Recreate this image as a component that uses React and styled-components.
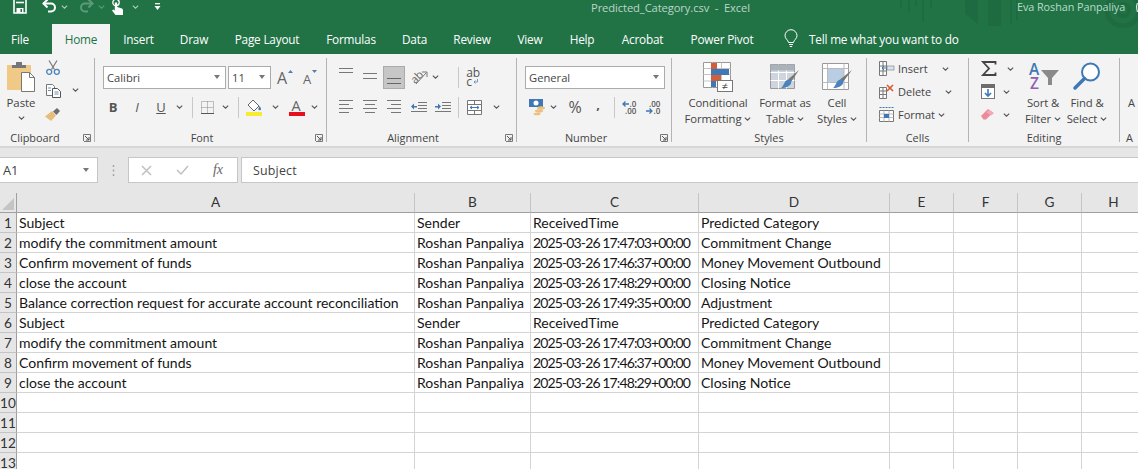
import React from "react";
import styled, { createGlobalStyle } from "styled-components";

const Global = createGlobalStyle`
  html, body { margin: 0; padding: 0; background: #fff; overflow: hidden; }
  * { box-sizing: border-box; }
  svg { display: block; overflow: visible; flex: none; }
`;

const UI = `"Open Sans", "Noto Sans", sans-serif`;

const Page = styled.div`
  width: 1138px; height: 469px; overflow: hidden; display: flex; flex-direction: column;
  font-family: ${UI}; color: #333; background: #fff;
`;

/* ---------- title bar ---------- */
const Header = styled.header`
  position: relative; height: 54px; background: #217346; flex: none; overflow: hidden;
`;
const TitleBar = styled.div`
  height: 24px; display: flex; align-items: flex-start; position: relative;
`;
const QuickAccess = styled.div`
  display: flex; align-items: center; height: 14px; width: 591px; padding-left: 13px;
`;
const QuickSlot = styled.span`
  display: flex; justify-content: center; align-items: center; flex: none;
  width: ${p => p.$w}px; margin-left: ${p => p.$ml || 0}px;
`;
const DocTitle = styled.div`
  width: 426px; font-size: 11.2px; line-height: 16px; color: #bcd6c7; white-space: pre; letter-spacing: -0.1px;
`;
const UserName = styled.div`
  font-size: 10.8px; line-height: 14px; color: #b9dcc8; white-space: nowrap; letter-spacing: -0.05px;
`;
const Watermark = styled.svg`
  position: absolute; left: 890px; top: 0; width: 248px; height: 26px; pointer-events: none;
`;
const TabBar = styled.nav`
  height: 30px; display: flex; align-items: stretch; font-size: 11.8px; color: #fff;
`;
const Tab = styled.div`
  display: flex; align-items: center; justify-content: center; flex: none; white-space: nowrap;
  width: ${p => p.$w}px; margin-right: ${p => p.$mr || 0}px; letter-spacing: -0.2px;
  background: ${p => (p.$active ? "#f3f3f3" : "transparent")};
  color: ${p => (p.$active ? "#217346" : "#fff")};
`;
const TellMe = styled.div`
  display: flex; align-items: center; gap: 11px; margin-left: 17px; white-space: nowrap; letter-spacing: -0.2px;
`;

/* ---------- ribbon ---------- */
const Ribbon = styled.section`
  height: 94px; flex: none; display: flex; background: #f3f3f3; border-bottom: 2px solid #d6d6d6; overflow: hidden;
`;
const Group = styled.div`
  position: relative; flex: none; width: ${p => p.$w}px; display: flex; flex-direction: column; height: 92px;
  &::after {
    content: ""; display: ${p => (p.$open ? "none" : "block")}; position: absolute; right: 0; top: 4px; bottom: 4px; width: 1px; background: #b4b4b4;
  }
`;
const GroupBody = styled.div`
  height: 76px; display: flex; flex-direction: ${p => (p.$row ? "row" : "column")}; padding-left: ${p => p.$pl || 0}px;
`;
const GroupLabel = styled.div`
  position: relative; height: 16px; font-size: 10.9px; line-height: 16px; color: #444; white-space: nowrap;
  width: ${p => p.$w}px; text-align: center;
`;
const Launcher = styled.svg`
  position: absolute; right: ${p => p.$r}px; top: 80px; width: 8px; height: 8px;
`;
const ToolRow = styled.div`
  display: flex; align-items: center; height: ${p => p.$h}px; padding-left: ${p => p.$pl || 0}px; padding-top: ${p => p.$pt || 0}px;
`;
const Tool = styled.span`
  display: flex; align-items: center; justify-content: center; flex: none; height: 100%;
  width: ${p => p.$w}px; margin-left: ${p => p.$ml || 0}px;
`;
const Sep = styled.span`
  flex: none; width: 1px; height: 21px; background: #c8c8c8; margin-left: ${p => p.$ml}px;
`;
const Combo = styled.div`
  display: flex; align-items: center; flex: none; height: 23px; width: ${p => p.$w}px; margin-left: ${p => p.$ml || 0}px;
  background: #fff; border: 1px solid #ababab; padding: 0 5px 0 3px; font-size: 11.2px; color: #444;
  justify-content: space-between;
`;
const ComboCaret = styled.i`
  width: 0; height: 0; border-left: 3.5px solid transparent; border-right: 3.5px solid transparent; border-top: 4px solid #777;
`;
const SelectedTool = styled.span`
  display: flex; align-items: center; justify-content: center; flex: none; height: 23px; width: 22px; margin-left: ${p => p.$ml}px;
  background: #c6c6c6; border: 1px solid #ababab;
`;
const TextTool = styled.span`
  font-family: ${UI}; font-size: 13px; line-height: 1; color: #555;
  font-style: ${p => (p.$italic ? "italic" : "normal")};
  font-weight: ${p => (p.$bold ? 700 : 400)};
  text-decoration: ${p => (p.$under ? "underline" : "none")};
  transform: translateY(${p => p.$lift || 0}px);
`;
const Percent = styled.span`
  font-size: 16px; color: #555; line-height: 1; font-family: ${UI};
`;
const WrapGlyph = styled.span`
  display: flex; flex-direction: column; font-size: 12px; line-height: 9px; color: #555; letter-spacing: -0.3px;
`;
const WrapLine = styled.span`
  display: flex; align-items: center; gap: 1px;
`;
const Decimal = styled.span`
  display: flex; flex-direction: column; align-items: flex-end; font-size: 8px; line-height: 7px; color: #555; font-weight: 600;
`;
const DecimalLine = styled.span`
  display: flex; align-items: center; gap: 1px;
`;
const PasteColumn = styled.div`
  width: 30px; flex: none; display: flex; flex-direction: column; align-items: center; padding-top: 7px; font-size: 11.4px; color: #444;
`;
const PasteCaption = styled.span`
  margin-top: 3px; line-height: 16px;
`;
const PasteCaret = styled.span`
  margin-top: 5px;
`;
const ClipTools = styled.div`
  margin-left: 9px; width: 16px; flex: none; display: flex; flex-direction: column; align-items: center; padding-top: 6px; gap: 9px;
`;
const ClipChevron = styled.div`
  margin-left: 11px; padding-top: 34px;
`;
const LargeTool = styled.div`
  flex: none; display: flex; flex-direction: column; align-items: center; width: ${p => p.$w}px; margin-left: ${p => p.$ml || 0}px;
  padding-top: 8px; font-size: 11.3px; color: #444; white-space: nowrap; letter-spacing: -0.1px;
`;
const LargeIcon = styled.div`
  height: 33px; display: flex; align-items: flex-start; justify-content: center;
`;
const LargeLine = styled.div`
  display: flex; align-items: center; gap: 3px; line-height: 16px; height: 16px;
`;
const CellAction = styled.div`
  display: flex; align-items: center; height: 23px; font-size: 11px; color: #444;
`;
const CellIcon = styled.span`
  width: 15px; margin-right: 4px; flex: none; display: flex; justify-content: center;
`;
const CellCaret = styled.span`
  margin-left: ${p => p.$ml}px;
`;
const CellsColumn = styled.div`
  padding: 3px 0 0 12px; display: flex; flex-direction: column;
`;
const EditColumn = styled.div`
  width: 52px; flex: none; padding: 3px 0 0 0; display: flex; flex-direction: column;
`;
const EditRow = styled.div`
  display: flex; align-items: center; height: 23px; padding-left: 12px;
`;
const EditCaret = styled.span`
  margin-left: ${p => p.$ml}px;
`;
const ClippedLetter = styled.div`
  font-size: 11px; color: #444; padding: 41px 0 0 8px; line-height: 16px;
`;

/* ---------- formula bar ---------- */
const FormulaBand = styled.div`
  height: 45px; flex: none; background: #e6e6e6; display: flex; align-items: flex-start; padding-top: 9px;
`;
const NameBox = styled.div`
  width: 98px; height: 26px; background: #fff; border: 1px solid #c6c6c6; border-left: none;
  display: flex; align-items: center; justify-content: space-between; padding: 0 8px 0 3px; font-size: 12.8px; color: #444;
`;
const Grip = styled.div`
  width: 30px; height: 26px; display: flex; align-items: center; justify-content: center; flex: none;
`;
const FxBox = styled.div`
  width: 110px; height: 26px; background: #fff; border: 1px solid #c6c6c6; display: flex; align-items: center; flex: none;
`;
const FxSlot = styled.span`
  width: ${p => p.$w}px; margin-left: ${p => p.$ml || 0}px; flex: none; display: flex; justify-content: center;
  font: italic 14px "Liberation Serif", serif; color: #666;
`;
const FormulaInput = styled.div`
  flex: 1; height: 26px; margin-left: 3px; background: #fff; border: 1px solid #c6c6c6; border-right: none;
  display: flex; align-items: center; padding-left: 11px; font-size: 12.4px; color: #444; letter-spacing: 0.2px;
`;

/* ---------- sheet ---------- */
const Sheet = styled.div`
  flex: 1; display: grid; grid-template-columns: 17px 398px 116px 168px 191px 64px 64px 64px 64px;
  grid-auto-rows: 20px; align-content: start; background: #fff; overflow: hidden;
`;
const Corner = styled.div`
  background: #e6e6e6; border-right: 1px solid #9f9f9f; border-bottom: 1px solid #9f9f9f; position: relative; overflow: hidden;
  &::after {
    content: ""; position: absolute; right: 2px; bottom: 2px; width: 0; height: 0;
    border-left: 12px solid transparent; border-bottom: 12px solid #c4c4c4;
  }
`;
const ColHead = styled.div`
  background: #e6e6e6; border-right: 1px solid #c4c4c4; border-bottom: 1px solid #9f9f9f;
  display: flex; align-items: center; justify-content: center; padding-bottom: 2px;
  font-family: Lato, sans-serif; font-size: 13.6px; color: #333;
`;
const RowHead = styled.div`
  background: #e6e6e6; border-right: 1px solid #9f9f9f; border-bottom: 1px solid #c4c4c4;
  display: flex; align-items: center; justify-content: center; overflow: hidden;
  font-family: Lato, sans-serif; font-size: 13.6px; color: #333;
`;
const Cell = styled.div`
  border-right: 1px solid #d4d4d4; border-bottom: 1px solid #d4d4d4; padding: 0 2px;
  font-family: Lato, sans-serif; font-size: 14.03px; line-height: 20px; color: #161616; white-space: nowrap; overflow: hidden;
  letter-spacing: ${p => (p.$date ? "-0.88px" : "0")};
`;

/* ---------- icons ---------- */
const Chev = ({ c = "#555", s = 7 }) => (
  <svg width={s} height={4} viewBox="0 0 7 4"><path d="M.8.6 3.5 3.2 6.2.6" fill="none" stroke={c} strokeWidth="1.1" /></svg>
);
const Launch = ({ r }) => (
  <Launcher $r={r} viewBox="0 0 8 8"><path d="M.5 7V.5H7.5V7.5H1" fill="none" stroke="#777" /><path d="M2 2l4 4M6 3v3H3" fill="none" stroke="#555" /></Launcher>
);
const SaveIcon = () => (
  <svg width="14" height="14" viewBox="0 0 14 14"><path d="M1-3h12v16H1z" fill="none" stroke="#fff" strokeWidth="1.6" /><path d="M3.5 13V8h7v5" fill="#fff" /><path d="M7.5 9h1.500v3H7.500z" fill="#217346" /><path d="M3 2.500h8" stroke="#fff" strokeWidth="1.6" /></svg>
);
const UndoIcon = ({ c = "#fff" }) => (
  <svg width="15" height="14" viewBox="0 0 15 14"><path d="M1.500 3.500h7.500a4 4 0 0 1 0 8H6" fill="none" stroke={c} strokeWidth="2" /><path d="M5.500-.5 1.500 3.500l4 4" fill="none" stroke={c} strokeWidth="2" /></svg>
);
const RedoIcon = () => (
  <svg width="15" height="14" viewBox="0 0 15 14"><path d="M13.500 3.500H6a4 4 0 0 0 0 8h3" fill="none" stroke="#5d9a78" strokeWidth="2" /><path d="M9.500-.5l4 4-4 4" fill="none" stroke="#5d9a78" strokeWidth="2" /></svg>
);
const TouchIcon = () => (
  <svg width="13" height="15" viewBox="0 0 13 15"><circle cx="5" cy="2.500" r="3.200" fill="none" stroke="#fff" strokeWidth="1.300" /><path d="M3.800 2.500h2.400v4.500l4 1.300c1.200.4 1.800 1 1.800 2.200V15H4.500L1 10.500l1.200-1 1.600 1z" fill="#fff" /></svg>
);
const CustomizeIcon = () => (
  <svg width="7" height="8" viewBox="0 0 7 8"><path d="M1 .7h5" stroke="#fff" strokeWidth="1.200" /><path d="M.5 3h6L3.500 7z" fill="#fff" /></svg>
);
const BulbIcon = () => (
  <svg width="14" height="18" viewBox="0 0 14 18"><path d="M4.500 12.500C4.200 10 1 8.800 1 5.700a6 6 0 0 1 12 0c0 3.100-3.200 4.300-3.500 6.800z" fill="none" stroke="#fff" /><path d="M5 14.500h4M5.800 16.500h2.400" stroke="#fff" /></svg>
);
const PasteIcon = () => (
  <svg width="28" height="31" viewBox="0 0 28 31"><rect x="0" y="4" width="24" height="25" fill="#f0c987" /><path d="M5 7V4h4V1h6v3h4v3z" fill="#767676" /><path d="M14.500 11.500h8l5 5v14h-13z" fill="#fff" stroke="#777" /><path d="M22.500 11.500v5h5" fill="none" stroke="#777" /></svg>
);
const CutIcon = () => (
  <svg width="14" height="15" viewBox="0 0 14 15"><path d="M3 .5l5.500 9M11 .5 5.500 9.500" stroke="#777" strokeWidth="1.200" fill="none" /><circle cx="3.200" cy="11.800" r="2.500" fill="none" stroke="#4f82b8" strokeWidth="1.300" /><circle cx="10.800" cy="11.800" r="2.500" fill="none" stroke="#4f82b8" strokeWidth="1.300" /></svg>
);
const CopyIcon = () => (
  <svg width="15" height="14" viewBox="0 0 15 14"><path d="M.5.500h6l2 2v9h-8z" fill="#fff" stroke="#777" /><path d="M6.500 4.500h5l3 3v6h-8z" fill="#fff" stroke="#555" /><path d="M2 4h3M2 6.500h3M8.500 8h4M8.500 10h4" stroke="#6d8fb2" /></svg>
);
const BrushIcon = () => (
  <svg width="16" height="14" viewBox="0 0 16 14"><path d="M0 9.500 7 4l4 4.500L6 14z" fill="#e7bd7a" /><path d="M8 4.500 12 1l3 3-3.500 4z" fill="#6d6d6d" /></svg>
);
const GrowIcon = ({ s = 14, up }) => (
  <svg width="18" height="16" viewBox="0 0 18 16">
    <text x={up ? 1 : 3} y="15" fontFamily="Open Sans" fontSize={s} fill="#666">A</text>
    <path d={up ? "M12 4l2.500-3L17 4z" : "M12 1h5l-2.500 3z"} fill="#4f7fae" />
  </svg>
);
const BordersIcon = () => (
  <svg width="13" height="13" viewBox="0 0 13 13"><path d="M.5.500h12v12H.5zM6.500.500v12M.5 6.500h12" fill="none" stroke="#888" strokeDasharray="1 1" /><path d="M0 12.500h13" stroke="#555" /></svg>
);
const FillIcon = () => (
  <svg width="16" height="17" viewBox="0 0 16 17"><path d="M7 1l6 6-5 5-6-6z" fill="#fff" stroke="#666" /><path d="M13.500 7c1 1.400 1.500 2.300 1.500 3a1.300 1.300 0 0 1-2.600 0c0-.6.400-1.500 1.100-3z" fill="#3f77b4" /><rect y="13" width="16" height="4" fill="#f7ec31" /></svg>
);
const FontColorIcon = () => (
  <svg width="16" height="17" viewBox="0 0 16 17"><text x="2.500" y="12" fontFamily="Open Sans" fontSize="14.500" fill="#666">A</text><rect y="13" width="16" height="4" fill="#e60f1c" /></svg>
);
const Lines = ({ rows, w = 14, c = "#777" }) => (
  <svg width={w} height="14" viewBox={`0 0 ${w} 14`}>
    {rows.map(([x1, x2, y], i) => <path key={i} d={`M${x1} ${y + 0.5}H${x2}`} stroke={c} />)}
  </svg>
);
const OrientIcon = () => (
  <svg width="18" height="16" viewBox="0 0 18 16"><text x="0" y="12" transform="rotate(-45 6 9)" fontFamily="Open Sans" fontSize="11" fill="#666">ab</text><path d="M5 15 15 4M11 3h5v5" fill="none" stroke="#777" /></svg>
);
const IndentIcon = ({ inc }) => (
  <svg width="16" height="12" viewBox="0 0 16 12">
    <path d="M7 1.500h9M7 4.500h9M7 7.500h9M0 10.500h16" stroke="#777" fill="none" />
    <path d={inc ? "M0 5h3V2.500L6 5.500 3 8.500V6.500H0z" : "M6 5H3V2.500L0 5.500l3 3V6.500h3z"} fill="#3f78b5" />
  </svg>
);
const MergeIcon = () => (
  <svg width="15" height="15" viewBox="0 0 15 15"><path d="M.5.500h14v14H.5zM.5 4.500h14M.5 10.500h14M7.500.500v4M7.500 10.500v4" fill="#fff" stroke="#777" /><path d="M3 7.500h9M3 7.500l2-1.500M3 7.500l2 1.500M12 7.500l-2-1.500M12 7.500l-2 1.500" stroke="#3f78b5" fill="none" /></svg>
);
const CurrencyIcon = () => (
  <svg width="17" height="16" viewBox="0 0 17 16"><rect x="0" y="0" width="14" height="8" fill="#3f78b5" /><ellipse cx="7" cy="4" rx="2.500" ry="2.500" fill="#fff" /><ellipse cx="12" cy="9" rx="4" ry="1.700" fill="#ecc17c" /><ellipse cx="10" cy="12" rx="4" ry="1.700" fill="#ecc17c" /><ellipse cx="8" cy="15" rx="3.500" ry="1.300" fill="#ecc17c" /></svg>
);
const ArrowLeft = () => <svg width="7" height="6" viewBox="0 0 7 6"><path d="M7 3H1.500M3.500.5 1 3l2.500 2.500" fill="none" stroke="#3f78b5" strokeWidth="1.300" /></svg>;
const ArrowRight = () => <svg width="7" height="6" viewBox="0 0 7 6"><path d="M0 3h5.500M3.500.5 6 3 3.500 5.500" fill="none" stroke="#3f78b5" strokeWidth="1.300" /></svg>;
const ReturnArrow = () => <svg width="5" height="5" viewBox="0 0 5 5"><path d="M4.500 0v3H1M2.500 1.500 1 3l1.500 1.500" fill="none" stroke="#5a86b4" strokeWidth=".8" /></svg>;
const CondIcon = () => (
  <svg width="30" height="30" viewBox="0 0 30 30">
    <path d="M.5.500h27v25H.5z" fill="#fff" stroke="#999" /><path d="M9.500.500v25M18.500.500v25M.5 6.500h27M.5 12.500h27M.5 19h27" stroke="#c4c4c4" fill="none" />
    <rect x="8" y="1" width="6" height="6" fill="#d0603a" /><rect x="8" y="7" width="18" height="6" fill="#3f78b5" /><rect x="8" y="13" width="10" height="6" fill="#d0603a" /><rect x="8" y="19" width="5" height="6" fill="#3f78b5" />
    <rect x="14.500" y="18.500" width="15" height="11" fill="#fff" stroke="#777" /><text x="18.500" y="28" fontFamily="Open Sans" fontSize="11" fill="#444">≠</text>
  </svg>
);
const TableBrushIcon = () => (
  <svg width="30" height="30" viewBox="0 0 30 30">
    <path d="M.5 2.500h24v24H.5z" fill="#cfd5dc" stroke="#999" /><path d="M8.500 2.500v24M16.500 2.500v24M.5 10.500h24M.5 18.500h24" stroke="#fff" fill="none" /><path d="M.5 2.500h24v6H.5z" fill="#aab2ba" />
    <path d="M29 8 21 20l-3-2.500z" fill="#777" /><path d="M17 18c3-1 5 1 4 3.500-1 2.500-5 4.500-10 4.500 3-2 3-6.500 6-8z" fill="#4a83bd" />
  </svg>
);
const CellStyleIcon = () => (
  <svg width="30" height="30" viewBox="0 0 30 30">
    <path d="M.5 1.500h26v26H.5z" fill="#fff" stroke="#999" /><rect x="5" y="6" width="17" height="14" fill="#b9cde3" /><path d="M.5 6.500h26M5.500 1.500v26M22 1.500v26M.5 20.500h26" stroke="#bbb" fill="none" />
    <path d="M30 8 21 20l-3-2.500z" fill="#777" /><path d="M17 18c3-1 5 1 4 3.500-1 2.500-5 4.500-10 4.500 3-2 3-6.500 6-8z" fill="#4a83bd" />
  </svg>
);
const InsertIcon = () => (
  <svg width="15" height="15" viewBox="0 0 15 15"><path d="M.5.500h7v14h-7zM.5 5h7M.5 10h7M4 .5v14" fill="#fff" stroke="#777" /><rect x="8" y="5" width="7" height="4" fill="#d8e4f0" stroke="#777" strokeWidth=".6" /><path d="M8 7H3M5 5 3 7l2 2" stroke="#3f78b5" fill="none" /></svg>
);
const DeleteIcon = () => (
  <svg width="15" height="15" viewBox="0 0 15 15"><path d="M.5 3.500h7v11h-7zM.5 7h7M.5 10.500h7M4 3.500v11" fill="#fff" stroke="#777" /><path d="M8 1l6 6M14 1 8 7" stroke="#d9582c" strokeWidth="1.600" /></svg>
);
const FormatIcon = () => (
  <svg width="15" height="15" viewBox="0 0 15 15"><path d="M.5 3.500h14v11H.5z" fill="#fff" stroke="#777" /><path d="M.5 7h14M.5 10.500h14M5 3.500v11M10 3.500v11" stroke="#bbb" /><rect x="5" y="7" width="5" height="4" fill="#3f78b5" /><path d="M.5.500h14" stroke="#3f78b5" strokeDasharray="2 1" /></svg>
);
const SumIcon = () => (
  <svg width="16" height="15" viewBox="0 0 16 15"><path d="M14.500 3.500V1H2l6 6.500L2 14h12.500v-2.500" fill="none" stroke="#444" strokeWidth="1.800" /></svg>
);
const FillDownIcon = () => (
  <svg width="14" height="15" viewBox="0 0 14 15"><rect x=".5" y=".5" width="13" height="14" fill="#fff" stroke="#777" /><rect x="0" y="0" width="14" height="4" fill="#6d6d6d" /><path d="M7 5v7M4 9l3 3 3-3" stroke="#3f78b5" strokeWidth="1.600" fill="none" /></svg>
);
const EraserIcon = () => (
  <svg width="14" height="11" viewBox="0 0 14 11"><path d="M0 7l7-7 5 3.500-7 7H2.500z" fill="#ec8a9b" /><path d="M8 1l5 3-2.500 2.500-5-3z" fill="#f3a9b6" /></svg>
);
const SortIcon = () => (
  <svg width="31" height="29" viewBox="0 0 31 29">
    <text x="1" y="13" fontFamily="Open Sans" fontWeight="600" fontSize="15.500" fill="#3f78b5">A</text>
    <text x="2" y="27" fontFamily="Open Sans" fontWeight="600" fontSize="15.500" fill="#8f5fb0">Z</text>
    <path d="M13 8h18l-7 8v7h-4v-7z" fill="#8a8a8a" />
  </svg>
);
const FindIcon = () => (
  <svg width="28" height="28" viewBox="0 0 28 28"><circle cx="17.500" cy="10" r="8.500" fill="#fff" stroke="#3f78b5" strokeWidth="2" /><path d="M11.500 16.500 2 26" stroke="#3f78b5" strokeWidth="3.500" strokeLinecap="round" /></svg>
);
const XIcon = () => <svg width="11" height="11" viewBox="0 0 11 11"><path d="M1 1l9 9M10 1l-9 9" stroke="#c0c0c0" strokeWidth="1.500" /></svg>;
const CheckIcon = () => <svg width="13" height="10" viewBox="0 0 13 10"><path d="M1 5l4 4 7-8" fill="none" stroke="#c0c0c0" strokeWidth="1.500" /></svg>;
const GripIcon = () => <svg width="3" height="11" viewBox="0 0 3 11"><path d="M1.500 0v2M1.500 4.500v2M1.500 9v2" stroke="#a5a5a5" strokeWidth="1.500" /></svg>;

const rows = [
  ["Subject", "Sender", "ReceivedTime", "Predicted Category"],
  ["modify the commitment amount", "Roshan Panpaliya", "2025-03-26 17:47:03+00:00", "Commitment Change"],
  ["Confirm movement of funds", "Roshan Panpaliya", "2025-03-26 17:46:37+00:00", "Money Movement Outbound"],
  ["close the account", "Roshan Panpaliya", "2025-03-26 17:48:29+00:00", "Closing Notice"],
  ["Balance correction request for accurate account reconciliation", "Roshan Panpaliya", "2025-03-26 17:49:35+00:00", "Adjustment"],
  ["Subject", "Sender", "ReceivedTime", "Predicted Category"],
  ["modify the commitment amount", "Roshan Panpaliya", "2025-03-26 17:47:03+00:00", "Commitment Change"],
  ["Confirm movement of funds", "Roshan Panpaliya", "2025-03-26 17:46:37+00:00", "Money Movement Outbound"],
  ["close the account", "Roshan Panpaliya", "2025-03-26 17:48:29+00:00", "Closing Notice"],
  [], [], [], [],
];
const cols = ["A", "B", "C", "D", "E", "F", "G", "H"];
const tabs = [
  ["File", 40, false, 12], ["Home", 58, true], ["Insert", 57], ["Draw", 54], ["Page Layout", 92], ["Formulas", 76], ["Data", 51], ["Review", 64], ["View", 52], ["Help", 52], ["Acrobat", 69], ["Power Pivot", 90],
];
const isDate = (s) => /^\d{4}-/.test(s || "");

export default function App() {
  return (
    <Page>
      <Global />
      <Header>
        <Watermark viewBox="0 0 248 26">
          <g fill="#1f6b41">
            <rect x="10" y="-2" width="2" height="10" /><rect x="18" y="-2" width="2" height="14" /><rect x="25" y="-2" width="2" height="8" /><rect x="32" y="-2" width="2" height="24" /><rect x="40" y="-2" width="2" height="10" />
            <path d="M75-2h13v26L75 14z" /><rect x="98" y="-2" width="13" height="28" /><rect x="120" y="-2" width="2" height="26" /><rect x="126" y="-2" width="2" height="22" />
          </g>
          <circle cx="233" cy="10" r="16" fill="none" stroke="#1f6b41" strokeWidth="5" />
          <circle cx="233" cy="10" r="6" fill="none" stroke="#1f6b41" strokeWidth="4" />
          <path d="M247.500 3c-1 2-1 6 0 9" fill="none" stroke="#dce9e1" strokeWidth="1.200" />
        </Watermark>
        <TitleBar>
          <QuickAccess>
            <QuickSlot $w={14}><SaveIcon /></QuickSlot>
            <QuickSlot $w={15} $ml={15}><UndoIcon /></QuickSlot>
            <QuickSlot $w={7} $ml={4}><Chev c="#a9cdb9" /></QuickSlot>
            <QuickSlot $w={15} $ml={11}><RedoIcon /></QuickSlot>
            <QuickSlot $w={7} $ml={4}><Chev c="#5d9a78" /></QuickSlot>
            <QuickSlot $w={13} $ml={6}><TouchIcon /></QuickSlot>
            <QuickSlot $w={7} $ml={8}><Chev c="#a9cdb9" /></QuickSlot>
            <QuickSlot $w={7} $ml={15}><CustomizeIcon /></QuickSlot>
          </QuickAccess>
          <DocTitle>Predicted_Category.csv  -  Excel</DocTitle>
          <UserName>Eva Roshan Panpaliya</UserName>
        </TitleBar>
        <TabBar>
          {tabs.map(([t, w, a, mr]) => <Tab key={t} $w={w} $active={a} $mr={mr}>{t}</Tab>)}
          <TellMe><BulbIcon />Tell me what you want to do</TellMe>
        </TabBar>
      </Header>

      <Ribbon>
        <Group $w={95}>
          <GroupBody $row $pl={6}>
            <PasteColumn>
              <PasteIcon />
              <PasteCaption>Paste</PasteCaption>
              <PasteCaret><Chev /></PasteCaret>
            </PasteColumn>
            <ClipTools><CutIcon /><CopyIcon /><BrushIcon /></ClipTools>
            <ClipChevron><Chev /></ClipChevron>
          </GroupBody>
          <GroupLabel $w={70}>Clipboard</GroupLabel>
          <Launch r={4} />
        </Group>

        <Group $w={232}>
          <GroupBody>
            <ToolRow $h={42} $pl={8} $pt={4}>
              <Combo $w={123}>Calibri<ComboCaret /></Combo>
              <Combo $w={43} $ml={2}>11<ComboCaret /></Combo>
              <Tool $w={18} $ml={5}><GrowIcon s={16} up /></Tool>
              <Tool $w={18} $ml={6}><GrowIcon s={13} /></Tool>
            </ToolRow>
            <ToolRow $h={22} $pl={6}>
              <Tool $w={24}><TextTool $bold>B</TextTool></Tool>
              <Tool $w={24}><TextTool $italic>I</TextTool></Tool>
              <Tool $w={24}><TextTool $under>U</TextTool></Tool>
              <Tool $w={12}><Chev /></Tool>
              <Sep $ml={7} />
              <Tool $w={16} $ml={6}><BordersIcon /></Tool>
              <Tool $w={20}><Chev /></Tool>
              <Sep $ml={3} />
              <Tool $w={16} $ml={7}><FillIcon /></Tool>
              <Tool $w={9} $ml={9}><Chev /></Tool>
              <Tool $w={16} $ml={9}><FontColorIcon /></Tool>
              <Tool $w={10} $ml={4}><Chev /></Tool>
            </ToolRow>
          </GroupBody>
          <GroupLabel $w={214}>Font</GroupLabel>
          <Launch r={4} />
        </Group>

        <Group $w={190}>
          <GroupBody>
            <ToolRow $h={42} $pl={9} $pt={4}>
              <Tool $w={16} $ml={2}><Lines rows={[[0, 14, -2], [0, 14, 2]]} /></Tool>
              <Tool $w={16} $ml={8}><Lines rows={[[0, 14, 3], [0, 14, 8]]} /></Tool>
              <SelectedTool $ml={5}><Lines rows={[[0, 14, 8], [0, 14, 13]]} c="#666" /></SelectedTool>
              <Tool $w={18} $ml={6}><OrientIcon /></Tool>
              <Tool $w={8} $ml={2}><Chev /></Tool>
              <Sep $ml={19} />
              <Tool $w={16} $ml={6}>
                <WrapGlyph>
                  <span>ab</span>
                  <WrapLine>c<ReturnArrow /></WrapLine>
                </WrapGlyph>
              </Tool>
            </ToolRow>
            <ToolRow $h={22} $pl={11}>
              <Tool $w={16}><Lines rows={[[0, 14, 0], [0, 10, 4], [0, 14, 8], [0, 10, 12]]} /></Tool>
              <Tool $w={16} $ml={8}><Lines rows={[[0, 14, 0], [2, 12, 4], [0, 14, 8], [2, 12, 12]]} /></Tool>
              <Tool $w={16} $ml={8}><Lines rows={[[0, 14, 0], [4, 14, 4], [0, 14, 8], [4, 14, 12]]} /></Tool>
              <Tool $w={16} $ml={9}><IndentIcon /></Tool>
              <Tool $w={16} $ml={8}><IndentIcon inc /></Tool>
              <Sep $ml={7} />
              <Tool $w={16} $ml={7}><MergeIcon /></Tool>
              <Tool $w={8} $ml={10}><Chev /></Tool>
            </ToolRow>
          </GroupBody>
          <GroupLabel $w={172}>Alignment</GroupLabel>
          <Launch r={4} />
        </Group>

        <Group $w={155}>
          <GroupBody>
            <ToolRow $h={42} $pl={8} $pt={4}>
              <Combo $w={140}>General<ComboCaret /></Combo>
            </ToolRow>
            <ToolRow $h={22} $pl={11}>
              <Tool $w={18}><CurrencyIcon /></Tool>
              <Tool $w={8} $ml={3}><Chev /></Tool>
              <Tool $w={18} $ml={9}><Percent>%</Percent></Tool>
              <Tool $w={8} $ml={10}><TextTool $bold $lift={-3}>,</TextTool></Tool>
              <Sep $ml={12} />
              <Tool $w={16} $ml={6}>
                <Decimal>
                  <DecimalLine><ArrowLeft />.0</DecimalLine>
                  <span>.00</span>
                </Decimal>
              </Tool>
              <Tool $w={16} $ml={8}>
                <Decimal>
                  <span>.00</span>
                  <DecimalLine><ArrowRight />.0</DecimalLine>
                </Decimal>
              </Tool>
            </ToolRow>
          </GroupBody>
          <GroupLabel $w={138}>Number</GroupLabel>
          <Launch r={4} />
        </Group>

        <Group $w={195}>
          <GroupBody $row>
            <LargeTool $w={72} $ml={10}>
              <LargeIcon><CondIcon /></LargeIcon>
              <LargeLine>Conditional</LargeLine>
              <LargeLine>Formatting <Chev /></LargeLine>
            </LargeTool>
            <LargeTool $w={62}>
              <LargeIcon><TableBrushIcon /></LargeIcon>
              <LargeLine>Format as</LargeLine>
              <LargeLine>Table <Chev /></LargeLine>
            </LargeTool>
            <LargeTool $w={42}>
              <LargeIcon><CellStyleIcon /></LargeIcon>
              <LargeLine>Cell</LargeLine>
              <LargeLine>Styles <Chev /></LargeLine>
            </LargeTool>
          </GroupBody>
          <GroupLabel $w={194}>Styles</GroupLabel>
        </Group>

        <Group $w={102}>
          <GroupBody>
            <CellsColumn>
              <CellAction><CellIcon><InsertIcon /></CellIcon>Insert<CellCaret $ml={14}><Chev /></CellCaret></CellAction>
              <CellAction><CellIcon><DeleteIcon /></CellIcon>Delete<CellCaret $ml={14}><Chev /></CellCaret></CellAction>
              <CellAction><CellIcon><FormatIcon /></CellIcon>Format<CellCaret $ml={3}><Chev /></CellCaret></CellAction>
            </CellsColumn>
          </GroupBody>
          <GroupLabel $w={101}>Cells</GroupLabel>
        </Group>

        <Group $w={151}>
          <GroupBody $row>
            <EditColumn>
              <EditRow><SumIcon /><EditCaret $ml={10}><Chev /></EditCaret></EditRow>
              <EditRow><FillDownIcon /><EditCaret $ml={8}><Chev /></EditCaret></EditRow>
              <EditRow><EraserIcon /><EditCaret $ml={8}><Chev /></EditCaret></EditRow>
            </EditColumn>
            <LargeTool $w={44}>
              <LargeIcon><SortIcon /></LargeIcon>
              <LargeLine>Sort &amp;</LargeLine>
              <LargeLine>Filter <Chev /></LargeLine>
            </LargeTool>
            <LargeTool $w={44}>
              <LargeIcon><FindIcon /></LargeIcon>
              <LargeLine>Find &amp;</LargeLine>
              <LargeLine>Select <Chev /></LargeLine>
            </LargeTool>
          </GroupBody>
          <GroupLabel $w={150}>Editing</GroupLabel>
        </Group>

        <Group $w={19} $open>
          <GroupBody><ClippedLetter>A</ClippedLetter></GroupBody>
          <GroupLabel $w={19}>A</GroupLabel>
        </Group>
      </Ribbon>

      <FormulaBand>
        <NameBox>A1<ComboCaret /></NameBox>
        <Grip><GripIcon /></Grip>
        <FxBox>
          <FxSlot $w={11} $ml={12}><XIcon /></FxSlot>
          <FxSlot $w={13} $ml={24}><CheckIcon /></FxSlot>
          <FxSlot $w={14} $ml={22}>fx</FxSlot>
        </FxBox>
        <FormulaInput>Subject</FormulaInput>
      </FormulaBand>

      <Sheet>
        <Corner />
        {cols.map(c => <ColHead key={c}>{c}</ColHead>)}
        {rows.map((r, i) => (
          <React.Fragment key={i}>
            <RowHead>{i + 1}</RowHead>
            {cols.map((c, j) => <Cell key={c} $date={isDate(r[j])}>{r[j] || ""}</Cell>)}
          </React.Fragment>
        ))}
      </Sheet>
    </Page>
  );
}
